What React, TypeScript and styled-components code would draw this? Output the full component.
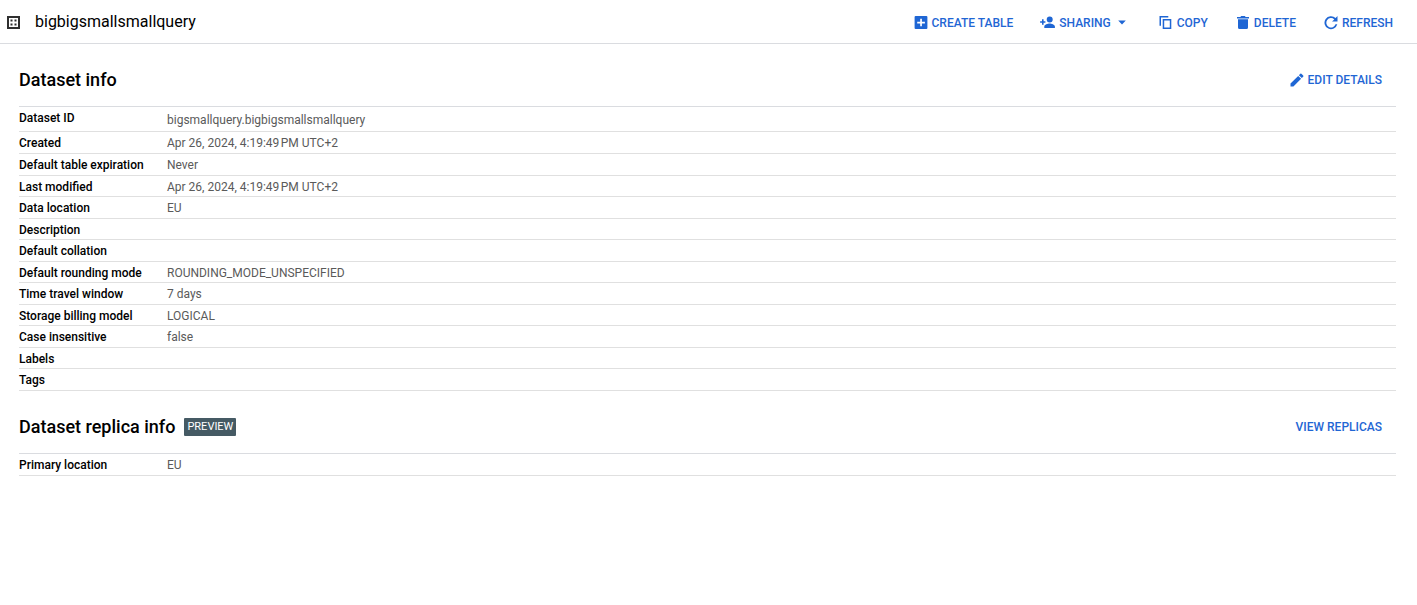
import React from "react";
import styled, { createGlobalStyle } from "styled-components";

const GlobalStyle = createGlobalStyle`
  * { box-sizing: border-box; }
  body {
    margin: 0;
    background: #fff;
    color: #000;
    font-family: Roboto, "Liberation Sans", sans-serif;
    font-size: 12px;
  }
`;

const Header = styled.header`
  display: flex;
  align-items: center;
  height: 44px;
  padding: 0 24px 0 6px;
  border-bottom: 1px solid #dadce0;
`;

const Title = styled.h1`
  margin: 0 0 0 14px;
  flex: 1;
  font-size: 16px;
  line-height: 24px;
  font-weight: 400;
`;

const Toolbar = styled.div`
  display: flex;
  align-items: center;
  gap: 26px;
  padding-top: 3px;
`;

const Action = styled.button`
  display: flex;
  align-items: center;
  gap: 2px;
  padding: 0;
  border: 0;
  background: none;
  color: #1f66d4;
  font-family: inherit;
  font-size: 12px;
  line-height: 18px;
  font-weight: 500;
  text-transform: uppercase;
  white-space: nowrap;
  cursor: pointer;
`;

const Icon = styled.svg`
  display: block;
  flex: none;
  width: 18px;
  height: 18px;
  fill: currentColor;
`;

const DatasetIcon = styled.svg`
  display: block;
  flex: none;
  width: 15px;
  height: 15px;
`;

const Main = styled.main`
  padding: 24px 21px 24px 19px;
`;

const SectionHead = styled.div`
  display: flex;
  align-items: center;
  justify-content: space-between;
  height: 24px;
  margin: 0 14px 14px 0;
`;

const Section = styled.section`
  & + & {
    margin-top: 24px;
  }
`;

const Heading = styled.h2`
  display: flex;
  align-items: center;
  gap: 9px;
  margin: 0;
  font-size: 18px;
  line-height: 24px;
  font-weight: 500;
`;

const Badge = styled.span`
  padding: 0 3px;
  border-radius: 1px;
  background: #455a64;
  color: #fff;
  font-size: 11px;
  line-height: 18px;
  font-weight: 400;
`;

const InfoTable = styled.table`
  width: 100%;
  border-collapse: collapse;
  table-layout: fixed;
  border-top: 1px solid #dadce0;
`;

const Row = styled.tr<{ $tall?: boolean }>`
  height: ${(p) => (p.$tall ? 25 : 22)}px;
  border-bottom: 1px solid #e0e0e0;

  &:nth-child(2n + 4) {
    height: 21px;
  }
`;

const Label = styled.th`
  width: 148px;
  padding: 3px 0 0;
  text-align: left;
  vertical-align: top;
  font-weight: 500;
  line-height: 16px;
`;

const Value = styled.td<{ $tall?: boolean }>`
  padding: ${(p) => (p.$tall ? 5 : 3)}px 0 0;
  vertical-align: top;
  color: #5a5a5a;
  line-height: 16px;
`;

type Item = { label: string; value?: string; tall?: boolean };

const datasetInfo: Item[] = [
  { label: "Dataset ID", value: "bigsmallquery.bigbigsmallsmallquery", tall: true },
  { label: "Created", value: "Apr 26, 2024, 4:19:49\u202fPM UTC+2" },
  { label: "Default table expiration", value: "Never" },
  { label: "Last modified", value: "Apr 26, 2024, 4:19:49\u202fPM UTC+2" },
  { label: "Data location", value: "EU" },
  { label: "Description" },
  { label: "Default collation" },
  { label: "Default rounding mode", value: "ROUNDING_MODE_UNSPECIFIED" },
  { label: "Time travel window", value: "7 days" },
  { label: "Storage billing model", value: "LOGICAL" },
  { label: "Case insensitive", value: "false" },
  { label: "Labels" },
  { label: "Tags" },
];

const replicaInfo: Item[] = [{ label: "Primary location", value: "EU" }];

function Info({ items }: { items: Item[] }) {
  return (
    <InfoTable>
      <tbody>
        {items.map((item) => (
          <Row key={item.label} $tall={item.tall}>
            <Label scope="row">{item.label}</Label>
            <Value $tall={item.tall}>{item.value}</Value>
          </Row>
        ))}
      </tbody>
    </InfoTable>
  );
}

function Glyph({ d }: { d: string }) {
  return (
    <Icon viewBox="0 0 18 18" aria-hidden="true">
      <path fillRule="evenodd" d={d} />
    </Icon>
  );
}

const glyphs = {
  add: "M3.600 2h10.800a1 1 0 0 1 1 1v11a1 1 0 0 1-1 1H3.600a1 1 0 0 1-1-1V3a1 1 0 0 1 1-1zM8.200 4.800v2.900H5.200v1.700h3v2.900h1.700V9.400h3V7.700h-3V4.800z",
  share: "M10.700 2.600a3 3 0 1 1 0 6 3 3 0 0 1 0-6zM5.300 14v-1.500c0-2 3.500-3 5.300-3s5.300 1 5.300 3V14zM3 5.200h1.600v2h1.800v1.500H4.600v2H3v-2H1.100V7.200H3z",
  caret: "M5.200 6.600h7.600L9 10.400z",
  copy: "M2.500 1.900h8.800v1.500H4v8.400H2.500zM5.700 5h8.600v10H5.700zM7.200 6.500v7h5.600v-7z",
  trash: "M3 3h3.300L7.200 2h3.600l.9 1H15v1.500H3zM4 5.300h10v8.200a1.500 1.500 0 0 1-1.500 1.500h-7A1.500 1.500 0 0 1 4 13.500z",
  refresh: "M13.600 4.100A6.500 6.500 0 1 0 15.300 10.300h-1.800A4.700 4.700 0 1 1 12.300 5.400L10 7.600h5.500V2.100z",
  edit: "M2.500 12.600v2.900h2.900l7.700-7.700-2.900-2.900zM15.200 5.700a.8.800 0 0 0 0-1.100l-1.800-1.800a.8.800 0 0 0-1.100 0l-1.400 1.400 2.900 2.900z",
};

export default function App() {
  return (
    <>
      <GlobalStyle />
      <Header>
        <DatasetIcon viewBox="0 0 15 15" aria-hidden="true">
          <path fill="none" stroke="#2f2f2f" strokeWidth="2" d="M2 3h11v11H2z" />
          <path fill="#2f2f2f" d="M4.500 5.500h2v2h-2zM8.500 5.500h2v2h-2zM4.500 9.500h2v2h-2zM8.500 9.500h2v2h-2z" />
        </DatasetIcon>
        <Title>bigbigsmallsmallquery</Title>
        <Toolbar role="toolbar" aria-label="Dataset actions">
          <Action type="button"><Glyph d={glyphs.add} />Create table</Action>
          <Action type="button"><Glyph d={glyphs.share} />Sharing<Glyph d={glyphs.caret} /></Action>
          <Action type="button"><Glyph d={glyphs.copy} />Copy</Action>
          <Action type="button"><Glyph d={glyphs.trash} />Delete</Action>
          <Action type="button"><Glyph d={glyphs.refresh} />Refresh</Action>
        </Toolbar>
      </Header>
      <Main>
        <Section>
          <SectionHead>
            <Heading>Dataset info</Heading>
            <Action type="button"><Glyph d={glyphs.edit} />Edit details</Action>
          </SectionHead>
          <Info items={datasetInfo} />
        </Section>
        <Section>
          <SectionHead>
            <Heading>Dataset replica info <Badge>PREVIEW</Badge></Heading>
            <Action type="button">View replicas</Action>
          </SectionHead>
          <Info items={replicaInfo} />
        </Section>
      </Main>
    </>
  );
}
